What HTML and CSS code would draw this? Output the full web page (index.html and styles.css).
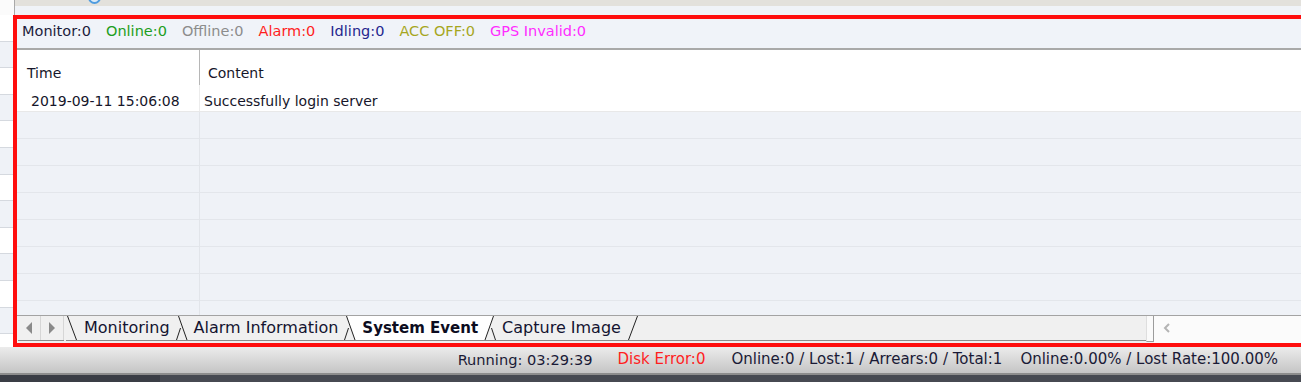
FILE: index.html
```html
<!DOCTYPE html>
<html>
<head>
<meta charset="utf-8">
<title>System Event</title>
<link rel="stylesheet" href="styles.css">
</head>
<body>
<div class="screen">
  <div class="top-strip">
    <div class="top-side"></div>
    <div class="top-main"><span class="blue-knob"></span></div>
  </div>

  <div class="main-row">
    <div class="side-list"></div>

    <div class="event-panel">
      <div class="counters">
        <span class="c-monitor">Monitor:0</span>
        <span class="c-online">Online:0</span>
        <span class="c-offline">Offline:0</span>
        <span class="c-alarm">Alarm:0</span>
        <span class="c-idling">Idling:0</span>
        <span class="c-acc">ACC OFF:0</span>
        <span class="c-gps">GPS Invalid:0</span>
      </div>

      <div class="list">
        <div class="list-head">
          <div class="col-time">Time</div>
          <div class="col-content">Content</div>
        </div>
        <div class="list-row">
          <div class="col-time">2019-09-11 15:06:08</div>
          <div class="col-content">Successfully login server</div>
        </div>
        <div class="list-empty"></div>
      </div>

      <div class="tabstrip">
        <div class="tab-nav">
          <span class="nav-btn">
            <svg width="8" height="12" viewBox="0 0 8 12"><polygon points="7,0 7,12 1,6" fill="#8a8a8a"/></svg>
          </span>
          <span class="nav-btn">
            <svg width="8" height="12" viewBox="0 0 8 12"><polygon points="1,0 1,12 7,6" fill="#8a8a8a"/></svg>
          </span>
        </div>
        <span class="sep"><svg width="12" height="24" viewBox="0 0 12 24"><path d="M1.5 0 L10.5 24" stroke="#222" fill="none"/></svg></span>
        <span class="tab">Monitoring</span>
        <span class="sep"><svg width="12" height="24" viewBox="0 0 12 24"><path d="M2.5 0 L11 24 M0.5 24 L4.5 12" stroke="#222" fill="none"/></svg></span>
        <span class="tab">Alarm Information</span>
        <span class="sep"><svg width="12" height="24" viewBox="0 0 12 24"><polygon points="2.5,0 12,0 12,24 11,24" fill="#fff"/><path d="M2.5 0 L11 24 M0.5 24 L4.5 12" stroke="#222" fill="none"/></svg></span>
        <span class="tab tab-active">System Event</span>
        <span class="sep"><svg width="12" height="24" viewBox="0 0 12 24"><polygon points="0,0 9.5,0 1,24 0,24" fill="#fff"/><path d="M9.5 0 L1 24 M7.5 12 L11.5 24" stroke="#222" fill="none"/></svg></span>
        <span class="tab">Capture Image</span>
        <span class="sep"><svg width="12" height="24" viewBox="0 0 12 24"><path d="M10.5 0 L1.5 24" stroke="#222" fill="none"/></svg></span>
        <span class="tab-fill"></span>
        <span class="splitter"></span>
        <div class="hscroll">
          <svg width="8" height="10" viewBox="0 0 8 10"><polyline points="6,1 2,5 6,9" stroke="#b4b4b4" stroke-width="2" fill="none"/></svg>
        </div>
      </div>
    </div>
  </div>

  <div class="statusbar">
    <span class="st-running">Running: 03:29:39</span>
    <span class="st-disk">Disk Error:0</span>
    <span class="st-count">Online:0 / Lost:1 / Arrears:0 / Total:1</span>
    <span class="st-rate">Online:0.00% / Lost Rate:100.00%</span>
  </div>

  <div class="taskbar">
    <div class="task-left"></div>
    <div class="task-right"></div>
  </div>
</div>
</body>
</html>
```

FILE: styles.css
```css
* {
  margin: 0;
  padding: 0;
  box-sizing: border-box;
}

body {
  width: 1301px;
  height: 382px;
  overflow: hidden;
  font-family: "DejaVu Sans", Verdana, sans-serif;
  font-size: 14px;
  line-height: 16px;
  color: #16162a;
  background: #f0f3f8;
}

.screen {
  display: flex;
  flex-direction: column;
  height: 382px;
}

/* strip left over from the panel above */
.top-strip {
  display: flex;
  height: 15px;
}

.top-side {
  width: 15px;
  background: #fbfbfb;
  border-right: 1px solid #a9a9a9;
}

.top-main {
  flex: 1;
  padding-left: 73px;
  background: linear-gradient(#e3e1dc 0 6px, #f0f3f8 6px);
}

.blue-knob {
  display: block;
  width: 13px;
  height: 13px;
  margin-top: -9px;
  border-radius: 50%;
  border: 2px solid #4f9ce0;
  background: #dcebf8;
}

.main-row {
  display: flex;
  height: 332px;
}

.side-list {
  width: 13px;
  background: repeating-linear-gradient(to bottom,
    #ffffff 0 25.6px, #d5d9df 25.6px 26.6px,
    #eff2f7 26.6px 52.2px, #d5d9df 52.2px 53.2px);
}

.event-panel {
  flex: 1;
  display: flex;
  flex-direction: column;
  border: 4px solid #ff0d0d;
  border-right: none;
}

/* counters line */
.counters {
  height: 31px;
  display: flex;
  gap: 15px;
  padding: 4px 0 0 5px;
  background: #f0f3f9;
  border-bottom: 2px solid #a9a9a9;
  font-size: 14.5px;
}

.c-monitor { color: #1c1c3c; }
.c-online { color: #1d9e22; }
.c-offline { color: #8c8c8c; }
.c-alarm { color: #ff1e1e; }
.c-idling { color: #26268e; }
.c-acc { color: #a6a61e; }
.c-gps { color: #ff2cff; }

/* event list */
.list {
  flex: 1;
  display: flex;
  flex-direction: column;
}

.list-head {
  height: 35px;
  display: flex;
  background: #fff;
}

.list-head .col-time {
  width: 183px;
  padding: 15px 0 0 10px;
  border-right: 1px solid #b6b6b6;
}

.list-head .col-content {
  padding: 15px 0 0 8px;
}

.list-row {
  height: 27px;
  display: flex;
  background: #fff;
  border-bottom: 1px solid #e8e8e8;
}

.list-row .col-time {
  width: 183px;
  padding: 8px 0 0 14px;
  border-right: 1px solid #ececec;
}

.list-row .col-content {
  padding: 8px 0 0 4px;
}

.list-empty {
  flex: 1;
  background:
    linear-gradient(to right, transparent 182px, #e2e5ea 182px 183px, transparent 183px),
    repeating-linear-gradient(to bottom, #eff2f7 0 26px, #e3e6eb 26px 27px);
}

/* sheet tabs */
.tabstrip {
  height: 28px;
  display: flex;
  align-items: flex-start;
  background: #f0f0f0;
  border-top: 1px solid #a3a3a3;
  font-size: 16px;
  line-height: 18px;
  color: #141430;
}

.tab-nav {
  display: flex;
  margin-left: 1px;
  margin-right: 2px;
  height: 25px;
  border-bottom: 1px solid #8c8c8c;
}

.nav-btn {
  width: 23px;
  display: flex;
  align-items: center;
  justify-content: center;
  border-right: 1px solid #d6d6d6;
}

.sep {
  height: 25px;
  border-bottom: 1px solid #8c8c8c;
}

.sep svg {
  display: block;
}

.tab {
  height: 25px;
  display: flex;
  align-items: center;
  padding: 0 6px;
  border-bottom: 1px solid #8c8c8c;
  white-space: nowrap;
}

.tab-active {
  background: #fff;
  font-weight: bold;
  font-size: 15px;
  color: #0c0c20;
}

.tab-fill {
  flex: 1;
  height: 25px;
  border-bottom: 1px solid #8c8c8c;
}

.splitter {
  width: 8px;
  height: 26px;
  background: #fafafa;
  border-left: 1px solid #dedede;
  border-right: 1px solid #9c9c9c;
  border-bottom: 1px solid #9c9c9c;
}

.hscroll {
  width: 147px;
  align-self: stretch;
  display: flex;
  align-items: center;
  padding: 0 0 4px 9px;
  background: #fbfbfb;
}

/* status line */
.statusbar {
  height: 26px;
  display: flex;
  justify-content: flex-end;
  padding: 4px 23px 0 0;
  background: linear-gradient(#ececec, #c5c5c5);
  font-size: 15px;
  line-height: 17px;
  color: #1a1a36;
}

.st-running {
  font-size: 14.6px;
}

.st-disk {
  margin-left: 25px;
  color: #ff1e1e;
}

.st-count {
  margin-left: 26px;
}

.st-rate {
  margin-left: 18px;
}

.taskbar {
  flex: 1;
  display: flex;
  border-top: 2px solid #8d8d8d;
}

.task-left {
  width: 160px;
  background: #3a3d45;
}

.task-right {
  flex: 1;
  background: #474a52;
}
```
